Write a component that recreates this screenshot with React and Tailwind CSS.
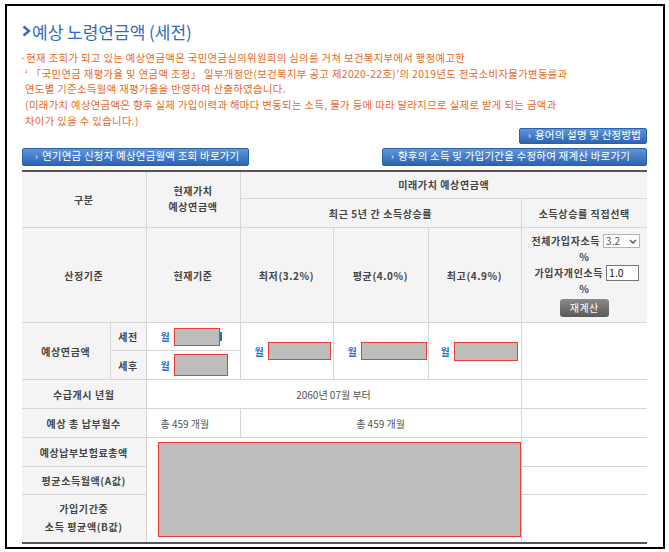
import { useState } from 'react';

const th = 'bg-[#f4f4f4] border border-[#d6d6d6] text-[#444] font-bold text-[10px] tracking-[0.6px] text-center align-middle';
const td = 'bg-white border border-[#d6d6d6] text-[#555] text-[10px] align-middle';

function Redact({ className }) {
  return <span className={`inline-block align-middle bg-[#bdbdbb] border-[1.5px] border-[#ec3b3b] ${className}`} />;
}

function Won() {
  return <span className="text-[#2f6fc8] font-bold text-[10px] mr-[4px] align-middle">월</span>;
}

function BlueButton({ children, className }) {
  return (
    <button className={`flex items-center gap-[4px] rounded-[2px] border border-[#2c5fa9] bg-linear-to-b from-[#5e96da] to-[#2d64b3] text-white text-[10.5px] leading-none tracking-[0.2px] ${className}`}>
      <span className="text-[9px]">›</span>
      {children}
    </button>
  );
}

export default function App() {
  const [rate, setRate] = useState('1.0');

  return (
    <div className="w-[669px] h-[552px] bg-white pt-[4px] pl-[5px] font-['Noto_Sans_CJK_KR','Noto_Sans',sans-serif]">
      <div className="w-[660px] h-[545px] border-2 border-black px-[15px] pt-[13px]">
        {/* title */}
        <div className="flex items-center h-[24px] text-[#2e6dc3]">
          <svg width="9" height="12" viewBox="0 0 9 12" className="mr-[1px]">
            <polyline points="1.5,1.5 7,6 1.5,10.5" fill="none" stroke="#2e6dc3" strokeWidth="2.4" />
          </svg>
          <h1 className="text-[17px] leading-none">예상 노령연금액 (세전)</h1>
        </div>

        {/* notice */}
        <div className="mt-[7px] text-[#e8681f] text-[10.3px] leading-[15.7px] tracking-[0.4px] whitespace-nowrap">
          <div className="-ml-[2px]">·현재 조회가 되고 있는 예상연금액은 국민연금심의위원회의 심의를 거쳐 보건복지부에서 행정예고한</div>
          <div className="pl-[3px]">‘ 「국민연금 재평가율 및 연금액 조정」 일부개정안(보건복지부 공고 제2020-22호)’의 2019년도 전국소비자물가변동률과</div>
          <div className="pl-[3px]">연도별 기준소득월액 재평가율을 반영하여 산출하였습니다.</div>
          <div className="pl-[3px]">(미래가치 예상연금액은 향후 실제 가입이력과 해마다 변동되는 소득, 물가 등에 따라 달라지므로 실제로 받게 되는 금액과</div>
          <div className="pl-[3px]">차이가 있을 수 있습니다.)</div>
        </div>

        <div className="flex justify-end w-[625px] -mt-[1px]">
          <BlueButton className="w-[128px] h-[16px] pl-[8px]">용어의 설명 및 산정방법</BlueButton>
        </div>

        <div className="flex justify-between w-[625px] mt-[4px]">
          <BlueButton className="w-[227px] h-[18px] pl-[12px]">연기연금 신청자 예상연금월액 조회 바로가기</BlueButton>
          <BlueButton className="w-[265px] h-[18px] pl-[8px]">향후의 소득 및 가입기간을 수정하여 재계산 바로가기</BlueButton>
        </div>

        {/* table */}
        <table className="mt-[4px] w-[625px] table-fixed border-collapse border-t-2 border-t-[#555] border-b-2 border-b-[#555] border-x-0 [&_td:first-child]:border-l-0 [&_th:first-child]:border-l-0">
          <colgroup>
            <col className="w-[88px]" />
            <col className="w-[36px]" />
            <col className="w-[94px]" />
            <col className="w-[93px]" />
            <col className="w-[95px]" />
            <col className="w-[93px]" />
            <col className="w-[126px]" />
          </colgroup>
          <tbody>
            <tr className="h-[28px]">
              <th rowSpan={2} colSpan={2} className={`${th} border-t-0`}>구분</th>
              <th rowSpan={2} className={`${th} border-t-0 leading-[16px]`}>현재가치<br />예상연금액</th>
              <th colSpan={4} className={`${th} border-t-0 border-r-0`}>미래가치 예상연금액</th>
            </tr>
            <tr className="h-[29px]">
              <th colSpan={3} className={th}>최근 5년 간 소득상승률</th>
              <th className={`${th} border-r-0`}>소득상승률 직접선택</th>
            </tr>
            <tr className="h-[95px]">
              <th colSpan={2} className={th}>산정기준</th>
              <th className={th}>현재기준</th>
              <th className={th}>최저(3.2%)</th>
              <th className={th}>평균(4.0%)</th>
              <th className={th}>최고(4.9%)</th>
              <th className={`${th} border-r-0 tracking-[0.3px]`}>
                <div className="flex flex-col items-center leading-[16px]">
                  <div className="flex items-center gap-[3px] pl-[3px]">
                    <span>전체가입자소득</span>
                    <span className="flex items-center justify-between w-[37px] h-[14px] border border-[#b5b5b5] bg-white px-[2px] font-normal text-[#555] text-[10px] tracking-normal">
                      3.2
                      <svg width="8" height="5" viewBox="0 0 8 5"><polyline points="1,1 4,4 7,1" fill="none" stroke="#555" strokeWidth="1.4" /></svg>
                    </span>
                  </div>
                  <div>%</div>
                  <div className="flex items-center gap-[3px] pl-[5px]">
                    <span>가입자개인소득</span>
                    <input
                      value={rate}
                      onChange={(e) => setRate(e.target.value)}
                      className="w-[33px] h-[16px] border border-[#777] bg-white px-[2px] font-normal text-[#222] text-[10.5px] tracking-normal"
                    />
                  </div>
                  <div>%</div>
                  <button className="mt-[2px] w-[49px] h-[18px] rounded-[3px] bg-linear-to-b from-[#8a8a8a] to-[#5a5a5a] text-white font-normal text-[10px] tracking-[0.5px]">재계산</button>
                </div>
              </th>
            </tr>
            <tr className="h-[28px]">
              <th rowSpan={2} className={th}>예상연금액</th>
              <th className={th}>세전</th>
              <td className={`${td} pl-[14px]`}>
                <Won /><Redact className="w-[46px] h-[18px]" /><span className="inline-block align-middle w-[2px] h-[9px] bg-[#2f6fc8]" />
              </td>
              <td rowSpan={2} className={`${td} pl-[14px]`}><Won /><Redact className="w-[63px] h-[18px]" /></td>
              <td rowSpan={2} className={`${td} pl-[14px]`}><Won /><Redact className="w-[66px] h-[18px]" /></td>
              <td rowSpan={2} className={`${td} pl-[12px]`}><Won /><Redact className="w-[64px] h-[19px]" /></td>
              <td rowSpan={2} className={`${td} border-r-0`} />
            </tr>
            <tr className="h-[29px]">
              <th className={th}>세후</th>
              <td className={`${td} pl-[14px]`}><Won /><Redact className="w-[54px] h-[22px]" /></td>
            </tr>
            <tr className="h-[29px]">
              <th colSpan={2} className={th}>수급개시 년월</th>
              <td colSpan={4} className={`${td} text-center`}>2060년 07월 부터</td>
              <td className={`${td} border-r-0`} />
            </tr>
            <tr className="h-[29px]">
              <th colSpan={2} className={th}>예상 총 납부월수</th>
              <td className={`${td} pl-[14px]`}>총 459 개월</td>
              <td colSpan={3} className={`${td} text-center`}>총 459 개월</td>
              <td className={`${td} border-r-0`} />
            </tr>
            <tr className="h-[29px]">
              <th colSpan={2} className={th}>예상납부보험료총액</th>
              <td colSpan={4} rowSpan={3} className={`${td} pl-[11px] py-[3px]`}>
                <div className="h-[95px] bg-[#bdbdbb] border-[1.5px] border-[#ec3b3b]" />
              </td>
              <td className={`${td} border-r-0`} />
            </tr>
            <tr className="h-[28px]">
              <th colSpan={2} className={th}>평균소득월액(A값)</th>
              <td className={`${td} border-r-0`} />
            </tr>
            <tr className="h-[48px]">
              <th colSpan={2} className={`${th} leading-[18px]`}>가입기간중<br />소득 평균액(B값)</th>
              <td className={`${td} border-r-0`} />
            </tr>
          </tbody>
        </table>
      </div>
    </div>
  );
}
